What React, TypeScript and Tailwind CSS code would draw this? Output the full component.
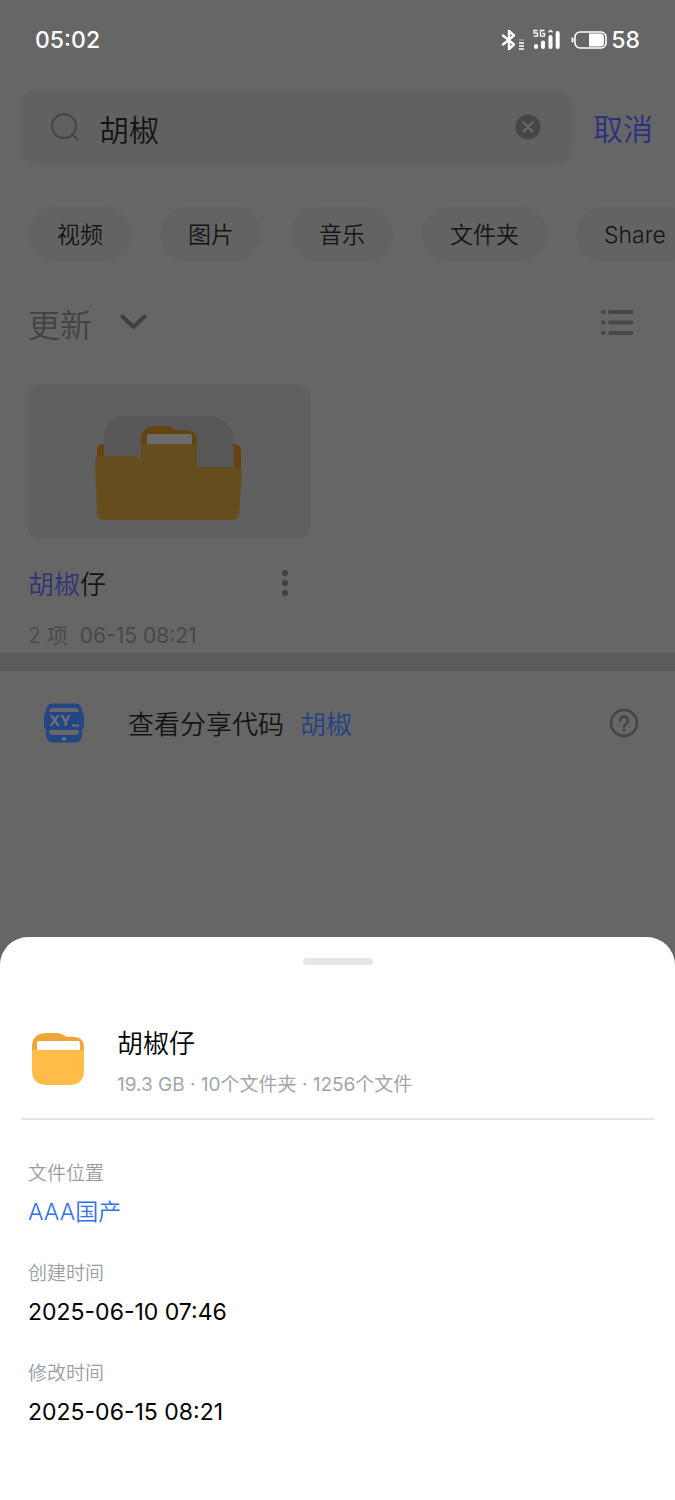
import React, { useState } from "react";

const filters = ["视频", "图片", "音乐", "文件夹", "Share"];

const details = [
  { label: "文件位置", value: "AAA国产", link: true },
  { label: "创建时间", value: "2025-06-10 07:46" },
  { label: "修改时间", value: "2025-06-15 08:21" },
];

const App: React.FC = () => {
  const [keyword, setKeyword] = useState("胡椒");

  return (
    <div className="flex min-h-screen flex-col overflow-x-hidden bg-[#666666] font-['Inter','Noto_Sans_CJK_SC',sans-serif] font-[350] text-[#141414]">
      <StatusBar />

      <main className="flex flex-1 flex-col">
        {/* SEARCH */}
        <form className="flex items-center gap-[21px] pt-[10px] pr-[22px] pl-[21px]" onSubmit={(e) => e.preventDefault()}>
          <div className="flex h-[74px] min-w-0 flex-1 items-center rounded-2xl bg-[#616161] pr-[31px] pl-[29px]">
            <SearchIcon />
            <input
              type="text"
              aria-label="搜索"
              value={keyword}
              onChange={(e) => setKeyword(e.target.value)}
              className="ml-[19px] h-12 min-w-0 flex-1 bg-transparent pt-0.5 text-[30px] outline-none"
            />
            <button type="button" aria-label="清除" onClick={() => setKeyword("")}>
              <ClearIcon />
            </button>
          </div>
          <button type="button" className="shrink-0 pt-1 text-[30px] leading-11 text-[#2b3080]">
            取消
          </button>
        </form>

        {/* FILTERS */}
        <div className="flex gap-[29px] overflow-hidden pt-[43px] pl-[29px]">
          {filters.map((name) => (
            <button key={name} type="button" className="h-[54px] shrink-0 rounded-full bg-[#636363] px-7 pt-0.5 text-[23px]">
              {name}
            </button>
          ))}
        </div>

        {/* SORT */}
        <div className="flex items-center justify-between pt-[35px] pr-[41px] pl-7">
          <button type="button" className="flex items-center gap-7 text-[32px] text-[#434343]">
            <span className="pt-2 leading-11">更新</span>
            <svg width="27" height="16" viewBox="0 0 27 16" fill="none" stroke="#404040" strokeWidth="4" strokeLinecap="round" strokeLinejoin="round">
              <path d="M2.5 2.5 13.5 13l11-10.5" />
            </svg>
          </button>
          <button type="button" aria-label="列表视图">
            <ListIcon />
          </button>
        </div>

        {/* RESULTS */}
        <div className="grid grid-cols-2 gap-14 px-7 pt-[37px]">
          <div>
            <div className="flex h-[154px] items-end justify-center rounded-xl bg-[#606060] pb-[18px]">
              <BigFolder />
            </div>
            <div className="flex items-start justify-between pt-[26px] pr-[21px]">
              <h2 className="text-[26px] leading-10">
                <span className="text-[#2f3478]">胡椒</span>仔
              </h2>
              <button type="button" aria-label="更多" className="pt-1">
                <svg width="8" height="28" viewBox="0 0 8 28" fill="#404040">
                  <circle cx="4" cy="4" r="3" />
                  <circle cx="4" cy="14" r="3" />
                  <circle cx="4" cy="24" r="3" />
                </svg>
              </button>
            </div>
            <p className="flex gap-3 pt-[15px] text-[21px] leading-8 text-[#484848]">
              <span>2 项</span>
              <time className="font-normal">06-15 08:21</time>
            </p>
          </div>
        </div>
        <div className="mt-px h-[18px] bg-[#5b5b5b]" />

        {/* SHARE CODE */}
        <div className="flex items-center pt-7 pr-9 pl-[43px]">
          <CodeIcon />
          <p className="ml-[43px] flex flex-1 gap-4 pt-1 text-[26px] leading-11">
            查看分享代码
            <a href="#share" className="text-[#234285]">
              胡椒
            </a>
          </p>
          <button type="button" aria-label="帮助">
            <HelpIcon />
          </button>
        </div>
      </main>

      {/* BOTTOM SHEET */}
      <section className="rounded-t-[28px] bg-white px-[21px] pt-[21px] pb-[68px] text-black">
        <div className="mx-auto h-[7px] w-[70px] rounded-full bg-[#e5e6e8]" />

        <div className="flex items-start gap-8 border-b-2 border-[#e5e6e8] pt-[59px] pb-3 pl-[10px]">
          <SmallFolder />
          <div>
            <h1 className="text-[26px] leading-10">胡椒仔</h1>
            <p className="text-[19px] leading-[42px] font-normal text-[#a0a5ac]">19.3 GB · 10个文件夹 · 1256个文件</p>
          </div>
        </div>

        <dl className="flex flex-col gap-6 pt-9 pl-[7px]">
          {details.map((item) => (
            <div key={item.label}>
              <dt className="text-[19px] leading-9 text-[#989da4]">{item.label}</dt>
              <dd className="text-[23px] leading-10">
                {item.link ? (
                  <a href="#location" className="text-[#3370f0]">
                    {item.value}
                  </a>
                ) : (
                  <time className="font-normal">{item.value}</time>
                )}
              </dd>
            </div>
          ))}
        </dl>
      </section>
    </div>
  );
};

/* ---------------------------------------------------------------------- */
/* STATUS BAR                                                             */
/* ---------------------------------------------------------------------- */
const StatusBar = () => (
  <header className="flex h-20 items-center justify-between px-[35px] text-[23px] font-medium text-white">
    <time>05:02</time>
    <div className="flex items-center gap-1">
      <svg width="106" height="24" viewBox="0 0 106 24" fill="none" stroke="#fff">
        {/* bluetooth */}
        <path d="M2 7.5 13 16.5 8 21V3l5 4.500L2 16.500" strokeWidth="2.4" strokeLinejoin="round" strokeLinecap="round" />
        <path d="M18 12h5" strokeWidth="1" opacity=".5" />
        <path d="M18 15h5M18 18h5M18 21h5" strokeWidth="1.6" />
        {/* signal */}
        <path d="M36.500 2.500h-3.500v2.700h3.500v3h-4M43.500 2.500h-4v5.700h4v-2.700h-2" strokeWidth="1.3" />
        <path d="M35 18v1M42 14.500v4.500M49.500 9v10M56.700 5v14" strokeWidth="4" strokeLinecap="round" />
        <path d="M47.500 4.200 49.500 2.500l2 1.700" strokeWidth="1.5" />
        {/* battery */}
        <path d="M71.500 10.500v3" strokeWidth="2" strokeLinecap="round" />
        <rect x="74" y="4" width="31" height="16" rx="5" strokeWidth="1.600" />
        <path d="M88 5.500h11.500a3.500 3.500 0 0 1 3.500 3.500v6a3.500 3.500 0 0 1-3.500 3.500H88z" fill="#fff" stroke="none" />
      </svg>
      <span>58</span>
    </div>
  </header>
);

/* ---------------------------------------------------------------------- */
/* ICONS                                                                  */
/* ---------------------------------------------------------------------- */
const SearchIcon = () => (
  <svg width="30" height="30" viewBox="0 0 30 30" fill="none" stroke="#484848" strokeWidth="2.4" strokeLinecap="round" className="shrink-0">
    <circle cx="14" cy="14" r="12" />
    <path d="m22.500 22.500 5.500 5.500" />
  </svg>
);

const ClearIcon = () => (
  <svg width="26" height="26" viewBox="0 0 26 26">
    <circle cx="13" cy="13" r="12.500" fill="#44474a" />
    <path d="m8.500 8.500 9 9M17.500 8.500l-9 9" stroke="#6b6b6b" strokeWidth="2" strokeLinecap="round" />
  </svg>
);

const ListIcon = () => (
  <svg width="34" height="27" viewBox="0 0 34 27" stroke="#484848" strokeWidth="4" strokeLinecap="round">
    <path d="M3 3h.800M3 13.500h.800M3 24h.800M10 3h21.500M10 13.500h21.500M10 24h21.500" />
  </svg>
);

const BigFolder = () => (
  <svg width="148" height="106" viewBox="0 0 148 106">
    <path d="M2 45v-10q0-5 5-6h5v25H2zM138 29h2q6 1 6 6v22h-8z" fill="#65440f" />
    <path d="M9 60V19Q10 7 25 1h93q15 4 20 16l1 43z" fill="#575757" />
    <path d="M46 30V26Q46 11 61 11h10c5 0 7 4 14 4h4q13 0 13 12v3z" fill="#65440f" />
    <rect x="52" y="19" width="45" height="14" rx="2" fill="#6c6c6c" />
    <path d="M46 29h56v30H46z" fill="#664d1e" />
    <path d="M0 47q0-6 6-6h31c5 0 7 2 8 6 1 3 3 5 7 5h88q8 0 7 8l-3 38q-1 7-7 7H9q-6 0-7-7z" fill="#664d1e" />
  </svg>
);

const SmallFolder = () => (
  <svg width="54" height="54" viewBox="0 0 54 54" className="mt-2 shrink-0">
    <path d="M1 20V15Q1 1 16 1h9c7 0 8 4 14 4h4q10 0 10 11v4z" fill="#eea636" />
    <rect x="6" y="9" width="43" height="15" rx="2" fill="#fff" />
    <path d="M1 18h52v20q0 15-15 15H16Q1 53 1 38z" fill="#ffbc49" />
  </svg>
);

const CodeIcon = () => (
  <svg width="42" height="42" viewBox="0 0 42 42" className="shrink-0">
    <rect x="3" y="1.500" width="36" height="39" rx="7" fill="#244687" />
    <rect x="1" y="10" width="40" height="18" rx="4" fill="#244687" />
    <path d="M6 10q0-4 4-4h22q4 0 4 4zM6 28h30v1q0 4-4 4H10q-4 0-4-4z" fill="#686868" />
    <circle cx="21" cy="37" r="2" fill="#707070" />
    <text x="6" y="24" fontSize="15" fontWeight="700" fill="#707070">
      XY
    </text>
    <path d="M29 23.500h7" stroke="#707070" strokeWidth="2" />
  </svg>
);

const HelpIcon = () => (
  <svg width="30" height="30" viewBox="0 0 30 30" fill="none" stroke="#434343" strokeWidth="2.400" strokeLinecap="round" strokeLinejoin="round">
    <circle cx="15" cy="15" r="13" />
    <path d="M11 12.500a4 4 0 1 1 6 3.500c-1.500.900-2 1.500-2 2.500" />
    <path d="M15 22v.100" strokeWidth="3" />
  </svg>
);

export default App;
